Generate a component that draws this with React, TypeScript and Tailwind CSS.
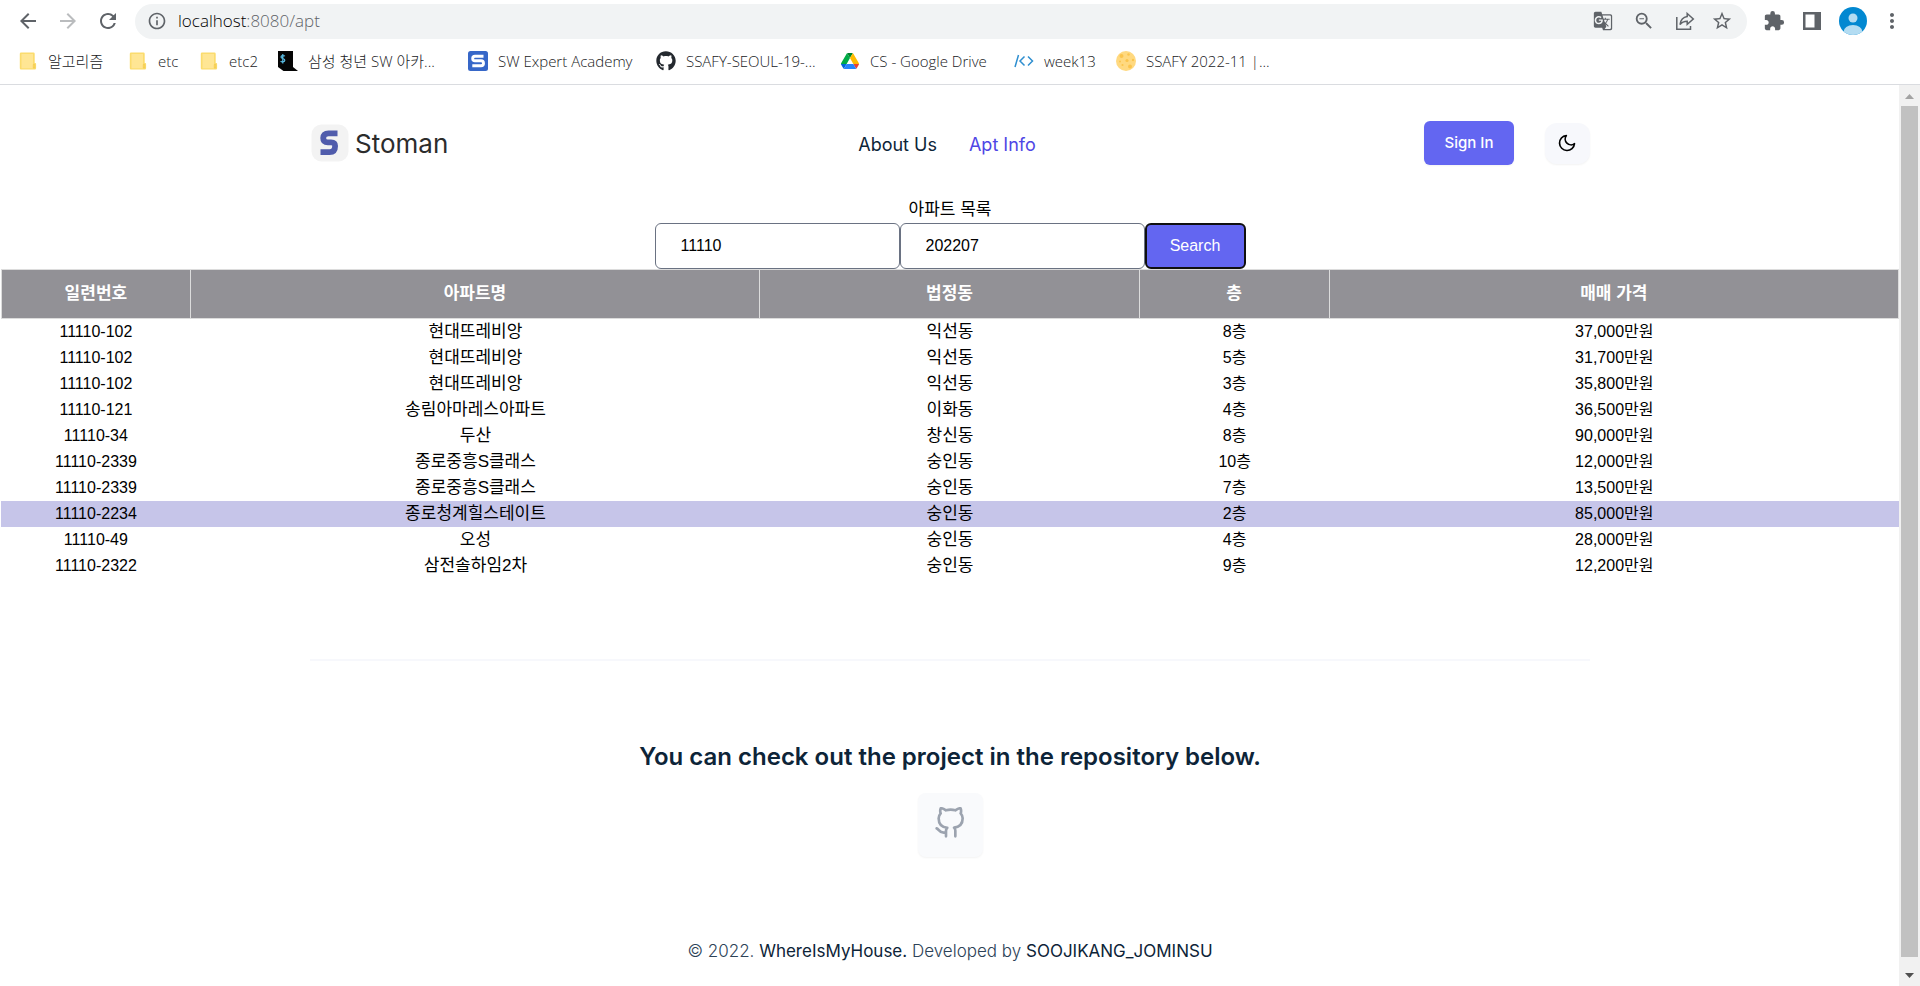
import React, { useState } from "react";
import { FiGithub, FiMoon } from "react-icons/fi";
import { FaGithub } from "react-icons/fa";
import {
  MdArrowBack,
  MdArrowForward,
  MdExtension,
  MdGTranslate,
  MdInfoOutline,
  MdMoreVert,
  MdOutlineZoomOut,
  MdRefresh,
  MdStarBorder,
} from "react-icons/md";

function FolderIcon() {
  return (
    <svg viewBox="0 0 20 20" className="size-5">
      <path d="M3 1.5h12.5a1.2 1.2 0 0 1 1.2 1.2V12h.6a.8.8 0 0 1 .8.8v4.5a1.2 1.2 0 0 1-1.2 1.2H3A1.2 1.2 0 0 1 1.8 17.300V2.700A1.200 1.200 0 0 1 3 1.500Z" fill="#fbdc6e" />
      <path d="M3.500 3h11.500v14.300H3.500Z" fill="#ffe694" />
      <path d="M15.200 13.500h1.600v3.500h-1.600Z" fill="#fdd95f" stroke="#eec54a" strokeWidth=".5" />
    </svg>
  );
}

function SsafyIcon() {
  return (
    <svg viewBox="0 0 20 20" className="size-5">
      <path d="M0 0h15v16l5 4H5.500L0 16Z" fill="#050505" />
      <path d="M6.800 5.300C6.300 4.300 3 4.200 3 6c0 1.800 3.800 1.200 3.800 3.200S3.300 11.300 2.700 10M4.800 3v9.500" fill="none" stroke="#5cc0e8" strokeWidth="1.200" />
    </svg>
  );
}

function ExpertIcon() {
  return (
    <svg viewBox="0 0 20 20" className="size-5">
      <rect width="20" height="20" rx="2.500" fill="#3767c8" />
      <path d="M15.500 5.200H7a2.300 2.300 0 0 0 0 4.600h6a2.500 2.500 0 0 1 0 5H4.300" fill="none" stroke="#fff" strokeWidth="2.900" />
    </svg>
  );
}

function DriveIcon() {
  return (
    <svg viewBox="0 0 87.300 78" className="h-5 w-5 p-px">
      <path d="m6.600 66.850 3.850 6.650c.8 1.400 1.950 2.500 3.300 3.300L27.500 53H0c0 1.550.4 3.100 1.200 4.500Z" fill="#0066da" />
      <path d="M43.650 25 29.900 1.200c-1.350.8-2.500 1.900-3.300 3.300L1.200 48.500A9 9 0 0 0 0 53h27.500Z" fill="#00ac47" />
      <path d="M73.550 76.800c1.350-.8 2.500-1.900 3.300-3.300l1.600-2.750 7.650-13.250c.8-1.400 1.200-2.950 1.200-4.500H59.800l5.850 11.500Z" fill="#ea4335" />
      <path d="M43.650 25 57.400 1.200C56.050.4 54.500 0 52.900 0H34.400c-1.600 0-3.150.45-4.500 1.200Z" fill="#00832d" />
      <path d="M59.800 53H27.500L13.750 76.800c1.350.8 2.900 1.200 4.500 1.200h50.800c1.600 0 3.150-.45 4.500-1.200Z" fill="#2684fc" />
      <path d="m73.400 26.500-12.700-22c-.8-1.400-1.950-2.500-3.300-3.300L43.650 25 59.800 53h27.450c0-1.550-.4-3.100-1.200-4.500Z" fill="#ffba00" />
    </svg>
  );
}

function CodeIcon() {
  return (
    <svg viewBox="0 0 20 20" className="size-5" fill="none" stroke="#2f8fd0" strokeWidth="1.500">
      <path d="M4.500 4 1 16M10.500 5.500 6 10l4.500 4.500M14 5.500l4.500 4.500-4.500 4.500" />
    </svg>
  );
}

function MoonCookieIcon() {
  return (
    <svg viewBox="0 0 20 20" className="size-5">
      <circle cx="10" cy="10" r="10" fill="#ffd980" />
      <g fill="#fbc44c">
        <circle cx="5.500" cy="5" r="2" />
        <circle cx="12.500" cy="3.500" r="1.300" />
        <circle cx="11" cy="9.500" r="1.600" />
        <circle cx="4" cy="10.500" r="1" />
        <circle cx="14" cy="15.500" r="2" />
        <circle cx="6.500" cy="14" r="1.100" />
        <circle cx="17" cy="9" r="1.200" />
      </g>
    </svg>
  );
}

function ShareIcon() {
  return (
    <svg viewBox="0 0 20 20" className="size-5" fill="none" stroke="#5f6368" strokeWidth="1.500">
      <path d="M1.800 6v12.200h13.700V15" />
      <path d="M12.200 2.500 18.300 8l-6.100 5.300v-3.100c-3.300 0-5.500 1-7.200 3.400.6-4.300 2.900-7.300 7.200-8Z" />
    </svg>
  );
}

function SidePanelIcon() {
  return (
    <svg viewBox="0 0 18 18" className="size-[18px]">
      <path fillRule="evenodd" d="M0 0h18v18H0ZM2.500 2.500v13h9v-13Z" fill="#5f6368" />
    </svg>
  );
}

function AvatarIcon() {
  return (
    <svg viewBox="0 0 28 28" className="size-7">
      <defs>
        <clipPath id="avatar-clip">
          <circle cx="14" cy="14" r="14" />
        </clipPath>
      </defs>
      <g clipPath="url(#avatar-clip)">
        <rect width="28" height="28" fill="#0288d1" />
        <circle cx="14" cy="11" r="4.500" fill="#b3dcf2" />
        <ellipse cx="14" cy="25" rx="9.500" ry="7" fill="#b3dcf2" />
      </g>
    </svg>
  );
}

const bookmarks = [
  { label: "알고리즘", width: "w-[110px]", icon: <FolderIcon /> },
  { label: "etc", width: "w-[71px]", icon: <FolderIcon /> },
  { label: "etc2", width: "w-[79px]", icon: <FolderIcon /> },
  { label: "삼성 청년 SW 아카...", width: "w-[190px]", icon: <SsafyIcon /> },
  { label: "SW Expert Academy", width: "w-[188px]", icon: <ExpertIcon /> },
  { label: "SSAFY-SEOUL-19-...", width: "w-[184px]", icon: <FaGithub className="size-5 text-[#24292f]" /> },
  { label: "CS - Google Drive", width: "w-[174px]", icon: <DriveIcon /> },
  { label: "week13", width: "w-[102px]", icon: <CodeIcon /> },
  { label: "SSAFY 2022-11 |...", width: "w-[174px]", icon: <MoonCookieIcon /> },
];

function BrowserBar() {
  return (
    <header className="border-b border-[#dadce0] bg-white font-['Open_Sans','Noto_Sans_CJK_KR',sans-serif] text-[#5f6368]">
      <div className="flex h-[42px] items-center px-4">
        <div className="flex items-center gap-4">
          <button aria-label="Back"><MdArrowBack className="size-6" /></button>
          <button aria-label="Forward" className="text-[#babcbe]"><MdArrowForward className="size-6" /></button>
          <button aria-label="Reload"><MdRefresh className="size-6" /></button>
        </div>
        <div className="ml-[15px] flex h-[35px] flex-1 items-center rounded-full bg-[#f1f3f4] pr-[14px] pl-3">
          <MdInfoOutline className="size-5" />
          <span className="ml-[11px] flex-1 text-[17px] leading-6 font-light text-[#5f6368]">
            <span className="text-black">localhost</span>:8080/apt
          </span>
          <div className="flex items-center gap-5">
            <button aria-label="Translate"><MdGTranslate className="size-5" /></button>
            <button aria-label="Zoom"><MdOutlineZoomOut className="size-[22px]" /></button>
            <button aria-label="Share"><ShareIcon /></button>
            <button aria-label="Bookmark" className="-ml-1"><MdStarBorder className="size-[22px]" /></button>
          </div>
        </div>
        <div className="ml-4 flex items-center gap-[18px]">
          <button aria-label="Extensions"><MdExtension className="size-[22px]" /></button>
          <button aria-label="Side panel"><SidePanelIcon /></button>
          <button aria-label="Profile"><AvatarIcon /></button>
          <button aria-label="Menu" className="-ml-[5px]"><MdMoreVert className="size-6" /></button>
        </div>
      </div>
      <nav className="flex h-[42px] items-center pb-1 pl-[18px] text-[15px] leading-5 font-light text-[#202124]">
        {bookmarks.map((b) => (
          <a key={b.label} href="#" className={`flex items-center gap-[10px] whitespace-nowrap ${b.width}`}>
            {b.icon}
            {b.label}
          </a>
        ))}
      </nav>
    </header>
  );
}

function SiteHeader() {
  return (
    <div className="mx-auto grid w-full max-w-[1280px] grid-cols-3 items-center pt-9 pb-8">
      <a href="#" className="flex items-center gap-[6px] pl-px text-[26px] leading-9 text-[#2c2c2c]">
        <svg viewBox="0 0 38 38" className="size-[38px]">
          <rect x=".5" y=".5" width="37" height="37" rx="10" fill="#f3f3f3" />
          <path d="M26.500 9.300H17.500C13.800 9.300 12.200 11.300 12.200 14c0 2.900 1.700 4.400 4.700 4.400h3.200c2.700 0 4 1.100 4 3.700 0 3.800-1.700 6.100-5.500 6.100H9.500" fill="none" stroke="#505cac" strokeWidth="5.800" />
        </svg>
        <span className="pt-[2px]">Stoman</span>
      </a>
      <nav className="flex items-center justify-center gap-8 pt-1 pr-[6px] text-[18px] leading-7">
        <a href="#" className="text-[#0d2438]">About Us</a>
        <a href="#" className="text-[#4f46e5]">Apt Info</a>
      </nav>
      <div className="flex items-center justify-end gap-[31px]">
        <button className="h-11 w-[90px] rounded-md bg-[#6366f1] text-[15px] leading-6 font-medium text-white shadow-xs">Sign In</button>
        <button aria-label="Dark mode" className="flex h-[41px] w-[45px] items-center justify-center rounded-xl bg-[#f7f8fc] text-black shadow-xs">
          <FiMoon className="size-5" />
        </button>
      </div>
    </div>
  );
}

function SearchForm() {
  const [region, setRegion] = useState("11110");
  const [month, setMonth] = useState("202207");
  const field = "h-[46px] w-[245px] rounded-md border border-gray-500 bg-white px-[25px] text-base text-black outline-none";
  return (
    <form
      className="flex justify-center font-['Liberation_Sans','Noto_Sans_CJK_KR',sans-serif]"
      onSubmit={(e) => e.preventDefault()}
    >
      <input aria-label="지역 코드" className={field} value={region} onChange={(e) => setRegion(e.target.value)} />
      <input aria-label="거래 년월" className={field} value={month} onChange={(e) => setMonth(e.target.value)} />
      <button className="h-[46px] w-[101px] rounded-md border-2 border-[#101010] bg-[#6366f1] text-base text-white">Search</button>
    </form>
  );
}

const columns = [
  { title: "일련번호", width: "w-[10%]" },
  { title: "아파트명", width: "w-[30%]" },
  { title: "법정동", width: "w-[20%]" },
  { title: "층", width: "w-[10%]" },
  { title: "매매 가격", width: "w-[30%]" },
];

const rows = [
  ["11110-102", "현대뜨레비앙", "익선동", "8층", "37,000만원"],
  ["11110-102", "현대뜨레비앙", "익선동", "5층", "31,700만원"],
  ["11110-102", "현대뜨레비앙", "익선동", "3층", "35,800만원"],
  ["11110-121", "송림아마레스아파트", "이화동", "4층", "36,500만원"],
  ["11110-34", "두산", "창신동", "8층", "90,000만원"],
  ["11110-2339", "종로중흥S클래스", "숭인동", "10층", "12,000만원"],
  ["11110-2339", "종로중흥S클래스", "숭인동", "7층", "13,500만원"],
  ["11110-2234", "종로청계힐스테이트", "숭인동", "2층", "85,000만원"],
  ["11110-49", "오성", "숭인동", "4층", "28,000만원"],
  ["11110-2322", "삼전솔하임2차", "숭인동", "9층", "12,200만원"],
];

const highlighted = 7;

function ApartmentTable() {
  return (
    <table className="w-full table-fixed border-separate border-spacing-0 text-center font-['Liberation_Sans','Noto_Sans_CJK_KR',sans-serif] text-black">
      <thead>
        <tr>
          {columns.map((c) => (
            <th key={c.title} className={`${c.width} h-[50px] border-y border-r border-[#dcdcdc] bg-[#929196] p-0 text-[17px] leading-6 font-bold text-white first:border-l`}>
              {c.title}
            </th>
          ))}
        </tr>
      </thead>
      <tbody>
        {rows.map((row, i) => (
          <tr key={i} className={i === highlighted ? "bg-[#c6c5e9]" : ""}>
            {row.map((cell, j) => (
              <td key={j} className={j === 1 || j === 2 ? "h-[26px] p-0 text-[17px] leading-6" : "h-[26px] p-0 text-base leading-6"}>
                {cell}
              </td>
            ))}
          </tr>
        ))}
      </tbody>
    </table>
  );
}

function SiteFooter() {
  return (
    <footer className="mx-auto mt-20 flex w-full max-w-[1280px] flex-col items-center border-t-2 border-[#f7f8fc] pt-20">
      <h2 className="text-[24px] leading-8 font-semibold text-[#0d2438]">
        You can check out the project in the repository below.
      </h2>
      <a href="#" aria-label="GitHub repository" className="mt-5 flex h-16 w-[65px] items-start justify-center rounded-lg bg-[#f9fafc] pt-[14px] text-[#9ca3af] shadow-xs">
        <FiGithub className="size-8" />
      </a>
      <p className="mt-20 pb-5 text-[17px] leading-7 font-light text-[#2c4257]">
        © 2022. <a href="#" className="font-normal text-[#0d2438]">WhereIsMyHouse.</a> Developed by{" "}
        <a href="#" className="font-normal text-[#0d2438]">SOOJIKANG_JOMINSU</a>
      </p>
    </footer>
  );
}

function ScrollTrack() {
  return (
    <div aria-hidden="true" className="flex w-[21px] shrink-0 flex-col items-center bg-[#f1f1f1]">
      <svg viewBox="0 0 21 21" className="size-[21px]"><path d="M6 14h9l-4.500-5Z" fill="#a3a3a3" /></svg>
      <div className="w-[17px] flex-1 bg-[#c1c1c1]" />
      <svg viewBox="0 0 21 29" className="h-[29px] w-[21px]"><path d="M6 16h9l-4.500 5Z" fill="#505050" /></svg>
    </div>
  );
}

export default function App() {
  return (
    <div className="flex h-screen flex-col overflow-hidden bg-white">
      <BrowserBar />
      <div className="flex min-h-0 flex-1">
        <main className="min-w-0 flex-1 overflow-hidden pl-px font-['Inter','Noto_Sans_CJK_KR',sans-serif]">
          <SiteHeader />
          <p className="text-center font-['Liberation_Sans','Noto_Sans_CJK_KR',sans-serif] text-[17px] leading-[26px] text-black">아파트 목록</p>
          <SearchForm />
          <ApartmentTable />
          <SiteFooter />
        </main>
        <ScrollTrack />
      </div>
    </div>
  );
}
